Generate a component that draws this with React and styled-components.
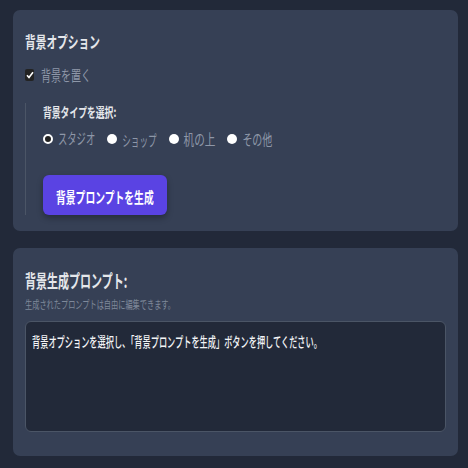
import React from 'react';
import styled, { createGlobalStyle } from 'styled-components';

const Global = createGlobalStyle`
	html, body {
		margin: 0;
		background: #222939;
	}
	body {
		font-family: 'Noto Sans CJK JP', 'Noto Sans', sans-serif;
	}
`;

// the reference uses a condensed face: glyphs are drawn narrow and stretched tall
const Squish = styled.span`
	display: inline-block;
	font-size: ${(p) => p.$w}px;
	line-height: 1;
	white-space: nowrap;
	transform: scaleY(${(p) => p.$h / p.$w});
	font-weight: ${(p) => p.$weight || 400};
`;

const Page = styled.div`
	display: flex;
	flex-direction: column;
	gap: 17px;
	padding: 10px 10px 0 13px;
	width: 468px;
	box-sizing: border-box;
`;

const Card = styled.section`
	background: #364055;
	border-radius: 7px;
	padding: ${(p) => p.$pad};
	box-sizing: border-box;
`;

const Title = styled.h2`
	margin: 0;
	color: #e5e7eb;
	height: 24px;
	display: flex;
	align-items: center;
`;

const CheckRow = styled.label`
	display: flex;
	align-items: center;
	gap: 7px;
	height: 14px;
	margin-top: 14px;
	color: #8e97a8;
`;

const Box = styled.span`
	width: 9px;
	height: 12px;
	background: #232323;
	border-radius: 2px;
	display: flex;
	align-items: center;
	justify-content: center;
`;

const Indent = styled.div`
	margin-top: 21px;
	border-left: 1px solid #4b5566;
	padding: 2px 0 0 17px;
	display: flex;
	flex-direction: column;
	align-items: flex-start;
`;

const SubTitle = styled.div`
	color: #e5e7eb;
	height: 16px;
	display: flex;
	align-items: center;
`;

const RadioRow = styled.div`
	display: flex;
	align-items: center;
	gap: 12px;
	height: 16px;
	margin-top: 10px;
`;

const Radio = styled.label`
	display: flex;
	align-items: center;
	gap: 5px;
	color: #8e97a8;
`;

const Dot = styled.span`
	width: ${(p) => (p.$on ? 6 : 10)}px;
	height: ${(p) => (p.$on ? 6 : 10)}px;
	border-radius: 50%;
	background: ${(p) => (p.$on ? '#232323' : '#ffffff')};
	border: ${(p) => (p.$on ? '2px solid #ffffff' : 'none')};
	display: inline-block;
`;

const Button = styled.button`
	margin-top: 28px;
	background: #5a43e3;
	color: #ffffff;
	border: none;
	border-radius: 6px;
	padding: 0 13px;
	height: 40px;
	font-family: inherit;
	box-shadow: 0 3px 6px rgba(0, 0, 0, 0.3);
`;

const Hint = styled.div`
	margin-top: 8px;
	height: 12px;
	display: flex;
	align-items: center;
	color: #7f899a;
`;

const Area = styled.div`
	margin-top: 9px;
	height: 111px;
	box-sizing: border-box;
	background: #222939;
	border: 1px solid #4b5566;
	border-radius: 6px;
	padding: 7px 6px;
	color: #f3f4f6;
	line-height: 16px;
`;

const types = [
	{ t: 'スタジオ', w: 9.3 },
	{ t: 'ショップ', w: 8.6 },
	{ t: '机の上', w: 10.6 },
	{ t: 'その他', w: 10 },
];

export default function App() {
	return (
		<>
			<Global />
			<Page>
				<Card $pad="20px 12px 16px">
					<Title>
						<Squish $w={10.7} $h={16} $weight={700}>背景オプション</Squish>
					</Title>
					<CheckRow>
						<Box>
							<svg width="8" height="8" viewBox="0 0 8 8">
								<path d="M1 4.2 L3 6.5 L7 1.2" stroke="#fff" strokeWidth="1.6" fill="none" />
							</svg>
						</Box>
						<Squish $w={10} $h={15}>背景を置く</Squish>
					</CheckRow>
					<Indent>
						<SubTitle>
							<Squish $w={8.8} $h={13} $weight={700}>背景タイプを選択:</Squish>
						</SubTitle>
						<RadioRow>
							{types.map((r, i) => (
								<Radio key={r.t}>
									<Dot $on={i === 0} />
									<Squish $w={r.w} $h={15}>{r.t}</Squish>
								</Radio>
							))}
						</RadioRow>
						<Button>
							<Squish $w={9.8} $h={15} $weight={700}>背景プロンプトを生成</Squish>
						</Button>
					</Indent>
				</Card>
				<Card $pad="20px 12px 24px">
					<Title>
						<Squish $w={11} $h={18} $weight={700}>背景生成プロンプト:</Squish>
					</Title>
					<Hint>
						<Squish $w={7.2} $h={11}>生成されたプロンプトは自由に編集できます。</Squish>
					</Hint>
					<Area>
						<Squish $w={8.2} $h={14} $weight={500}>
							背景オプションを選択し、「背景プロンプトを生成」ボタンを押してください。
						</Squish>
					</Area>
				</Card>
			</Page>
		</>
	);
}
